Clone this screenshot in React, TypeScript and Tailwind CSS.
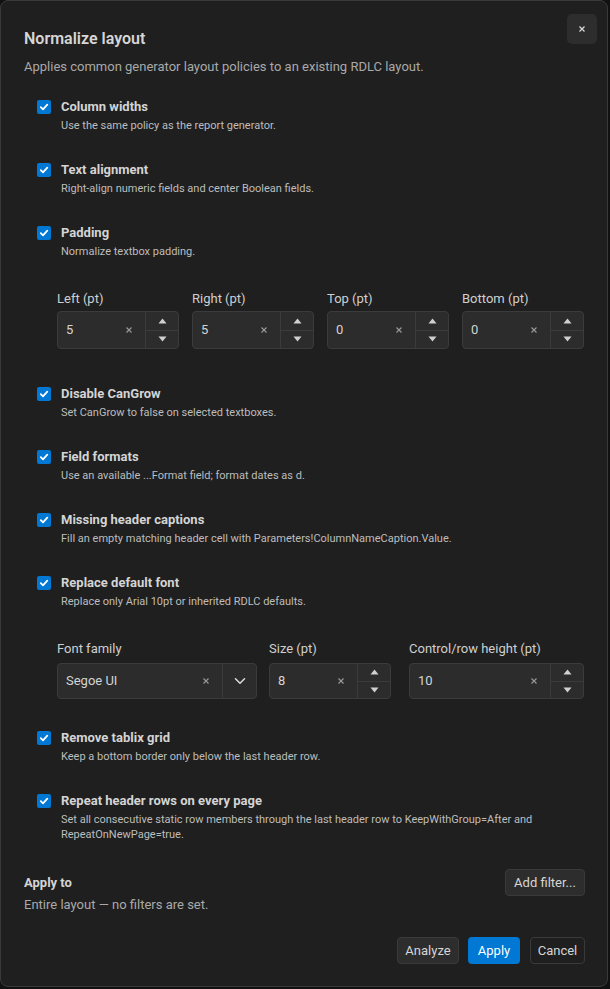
import React from "react";

const FONT = { fontFamily: '"Segoe UI", Roboto, "Noto Sans", sans-serif' };

function Check() {
  return (
    <div className="mt-[2px] flex h-[14px] w-[14px] shrink-0 items-center justify-center rounded-[2px] bg-[#0078d4]">
      <svg width="10" height="10" viewBox="0 0 10 10" fill="none">
        <path d="M1.8 5.2 L4 7.4 L8.3 2.6" stroke="#ffffff" strokeWidth="1.8" strokeLinecap="round" strokeLinejoin="round" />
      </svg>
    </div>
  );
}

function Item({ title, desc }: { title: string; desc: React.ReactNode }) {
  return (
    <div className="flex gap-[10px]">
      <Check />
      <div className="flex flex-col">
        <div className="text-[13px] font-bold leading-[18px] text-[#d4d4d4]">{title}</div>
        <div className="mt-[2px] text-[11px] leading-[15px] text-[#bdbdbd]">{desc}</div>
      </div>
    </div>
  );
}

function ClearX() {
  return (
    <svg width="8" height="8" viewBox="0 0 8 8" className="shrink-0">
      <path d="M1.5 1.5 L6.5 6.5 M6.5 1.5 L1.5 6.5" stroke="#9a9a9a" strokeWidth="1.1" />
    </svg>
  );
}

function NumberInput({ value, className, spinW, heightClass }: { value: string; className: string; spinW: string; heightClass: string }) {
  return (
    <div className={`flex ${heightClass} ${className} rounded-[4px] border border-[#3b3b3b] bg-[#2c2c2c]`}>
      <div className="flex flex-1 items-center pl-[8px] pr-[12px]">
        <span className="flex-1 text-[13px] text-[#d4d4d4]">{value}</span>
        <ClearX />
      </div>
      <div className={`flex ${spinW} flex-col border-l border-[#3b3b3b]`}>
        <div className="flex flex-1 items-center justify-center border-b border-[#3b3b3b]">
          <svg width="9" height="6" viewBox="0 0 9 6"><path d="M4.5 0.5 L8.5 5.5 L0.5 5.5 Z" fill="#d0d0d0" /></svg>
        </div>
        <div className="flex flex-1 items-center justify-center">
          <svg width="9" height="6" viewBox="0 0 9 6"><path d="M0.5 0.5 L8.5 0.5 L4.5 5.5 Z" fill="#d0d0d0" /></svg>
        </div>
      </div>
    </div>
  );
}

function Field({ label, children, className }: { label: string; children: React.ReactNode; className: string }) {
  return (
    <div className={`flex flex-col ${className}`}>
      <div className="text-[13px] leading-[18px] text-[#cfcfcf]">{label}</div>
      {children}
    </div>
  );
}

export default function App() {
  return (
    <div className="h-[989px] w-[610px] bg-[#111111]" style={FONT}>
      <div className="relative flex h-[987px] w-[608px] flex-col rounded-[8px] border border-[#3a3a3a] bg-[#1f1f1f] pl-[23px] pr-[22px] pt-[27px]">
        <button className="absolute right-[10px] top-[13px] flex h-[30px] w-[30px] items-center justify-center rounded-[5px] bg-[#2d2d2d]">
          <svg width="8" height="8" viewBox="0 0 8 8">
            <path d="M1.5 1.5 L6.5 6.5 M6.5 1.5 L1.5 6.5" stroke="#d8d8d8" strokeWidth="1.2" />
          </svg>
        </button>

        <div className="text-[16px] font-semibold leading-[22px] text-[#d6d6d6]">Normalize layout</div>
        <div className="mt-[8px] text-[13px] leading-[18px] text-[#a9a9a9]">
          Applies common generator layout policies to an existing RDLC layout.
        </div>

        <div className="mt-[22px] flex flex-col gap-[28px] pl-[13px]">
          <Item title="Column widths" desc="Use the same policy as the report generator." />
          <Item title="Text alignment" desc="Right-align numeric fields and center Boolean fields." />
          <Item title="Padding" desc="Normalize textbox padding." />

          <div className="flex w-[547px] justify-between pb-[8px] pl-[20px] pt-[3px]">
            {[
              ["Left (pt)", "5"],
              ["Right (pt)", "5"],
              ["Top (pt)", "0"],
              ["Bottom (pt)", "0"],
            ].map(([l, v]) => (
              <Field key={l} label={l} className="w-[122px] gap-[3px]">
                <NumberInput value={v} className="w-[122px]" spinW="w-[33px]" heightClass="h-[38px]" />
              </Field>
            ))}
          </div>

          <Item title="Disable CanGrow" desc="Set CanGrow to false on selected textboxes." />
          <Item title="Field formats" desc="Use an available ...Format field; format dates as d." />
          <Item title="Missing header captions" desc="Fill an empty matching header cell with Parameters!ColumnNameCaption.Value." />
          <Item title="Replace default font" desc="Replace only Arial 10pt or inherited RDLC defaults." />

          <div className="flex pb-[2px] pl-[20px] pt-[3px]">
            <Field label="Font family" className="w-[200px] gap-[5px]">
              <div className="flex h-[36px] w-[200px] rounded-[4px] border border-[#3b3b3b] bg-[#2c2c2c]">
                <div className="flex flex-1 items-center pl-[8px] pr-[12px]">
                  <span className="flex-1 text-[13px] text-[#d4d4d4]">Segoe UI</span>
                  <ClearX />
                </div>
                <div className="flex w-[34px] items-center justify-center border-l border-[#3b3b3b]">
                  <svg width="12" height="8" viewBox="0 0 12 8" fill="none">
                    <path d="M1.5 1.8 L6 6.2 L10.5 1.8" stroke="#d8d8d8" strokeWidth="1.6" strokeLinecap="round" strokeLinejoin="round" />
                  </svg>
                </div>
              </div>
            </Field>
            <Field label="Size (pt)" className="ml-[12px] w-[122px] gap-[5px]">
              <NumberInput value="8" className="w-[122px]" spinW="w-[33px]" heightClass="h-[36px]" />
            </Field>
            <Field label="Control/row height (pt)" className="ml-[18px] w-[175px] gap-[5px]">
              <NumberInput value="10" className="w-[175px]" spinW="w-[33px]" heightClass="h-[36px]" />
            </Field>
          </div>

          <Item title="Remove tablix grid" desc="Keep a bottom border only below the last header row." />
          <Item
            title="Repeat header rows on every page"
            desc={
              <>
                Set all consecutive static row members through the last header row to KeepWithGroup=After and
                <br />
                RepeatOnNewPage=true.
              </>
            }
          />
        </div>

        <div className="mt-[27px] flex items-start justify-between">
          <div className="mt-[5px] flex flex-col">
            <div className="text-[13px] font-bold leading-[18px] text-[#d4d4d4]">Apply to</div>
            <div className="mt-[4px] text-[13px] leading-[18px] text-[#a9a9a9]">Entire layout — no filters are set.</div>
          </div>
          <button className="flex h-[27px] w-[80px] items-center justify-center rounded-[4px] border border-[#3a3a3a] bg-[#2d2d2d] text-[13px] text-[#d6d6d6]">
            Add filter...
          </button>
        </div>

        <div className="mt-[23px] flex justify-end">
          <button className="flex h-[27px] w-[62px] items-center justify-center rounded-[4px] border border-[#3a3a3a] bg-[#2d2d2d] text-[13px] text-[#d6d6d6]">
            Analyze
          </button>
          <button className="ml-[9px] flex h-[27px] w-[52px] items-center justify-center rounded-[4px] bg-[#0078d4] text-[13px] text-white">
            Apply
          </button>
          <button className="ml-[10px] flex h-[27px] w-[55px] items-center justify-center rounded-[4px] border border-[#3a3a3a] bg-[#1f1f1f] text-[13px] text-[#d6d6d6]">
            Cancel
          </button>
        </div>
      </div>
    </div>
  );
}
